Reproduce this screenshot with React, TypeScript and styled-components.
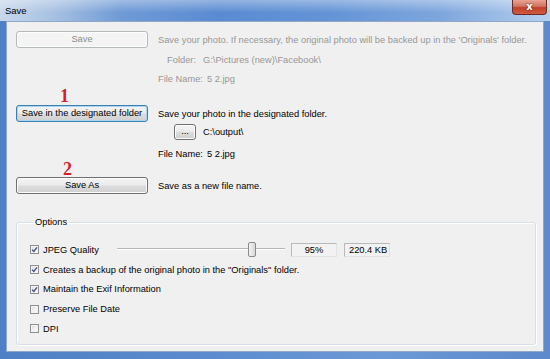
import React from 'react'
import styled, { createGlobalStyle } from 'styled-components'

const GlobalStyle = createGlobalStyle`
  html, body {
    margin: 0;
    padding: 0;
    background: #ffffff;
  }
  body {
    font-family: 'Liberation Sans', Arial, sans-serif;
    font-size: 9.3px;
    color: #000000;
  }
`

const Window = styled.div`
  width: 550px;
  height: 359px;
  display: flex;
  flex-direction: column;
  background: linear-gradient(90deg, #4f7fc4 0%, #5d8dd0 40%, #6b98d6 70%, #5b89cb 100%);
`

const TitleBar = styled.div`
  height: 21px;
  flex: none;
  display: flex;
  align-items: flex-start;
  justify-content: space-between;
  padding-left: 5px;
  padding-right: 3px;
  background:
    linear-gradient(180deg, rgba(255, 255, 255, 0.35) 0%, rgba(255, 255, 255, 0) 60%),
    linear-gradient(90deg, #c8d8ec 0%, #a6c0e2 10%, #6f9ad6 22%, #5a8bd2 40%, #6494d6 60%, #7ea6dd 80%, #a8c5e9 95%, #b8d0ee 100%);
`

const Title = styled.span`
  font-family: 'Liberation Sans', Arial, sans-serif;
  font-size: 9.5px;
  line-height: 21px;
  color: #000000;
`

const CloseButton = styled.div`
  width: 35px;
  height: 15px;
  box-sizing: border-box;
  border: 1px solid #6d2a23;
  border-top: none;
  border-radius: 0 0 4px 4px;
  background: linear-gradient(180deg, #e8a493 0%, #d27261 45%, #c0402c 55%, #d05a40 100%);
  display: flex;
  align-items: center;
  justify-content: center;
  color: #ffffff;
  font-family: 'DejaVu Sans', sans-serif;
  font-weight: bold;
  font-size: 10px;
  line-height: 1;
  text-shadow: 0 0 2px #5a1a10;
`

const Frame = styled.div`
  flex: 1;
  display: flex;
  padding: 0 6px 7px 6px;
`

const Client = styled.div`
  flex: 1;
  display: flex;
  flex-direction: column;
  background: #f0f0f0;
  border: 1px solid #91a7c6;
  padding: 9px 7px 6px 9px;
`

const ActionRow = styled.div`
  display: grid;
  grid-template-columns: 132px 1fr;
  column-gap: 10px;
  align-items: center;
  height: 17px;
`

const Button = styled.div<{ disabled?: boolean; focused?: boolean; width?: number }>`
  box-sizing: border-box;
  height: 17px;
  width: ${({ width }) => (width ? `${width}px` : 'auto')};
  border-radius: 3px;
  display: flex;
  align-items: center;
  justify-content: center;
  line-height: 1;
  border: 1px solid
    ${({ disabled, focused }) => (disabled ? '#b4b9bc' : focused ? '#3c7fb1' : '#707070')};
  background: ${({ disabled }) =>
    disabled
      ? '#f4f4f4'
      : 'linear-gradient(180deg, #f4f4f4 0%, #ebebeb 48%, #dddddd 52%, #cfcfcf 100%)'};
  box-shadow: ${({ focused }) => (focused ? 'inset 0 0 0 1px #a8d6f2' : 'inset 0 0 0 1px #fcfcfc')};
  color: ${({ disabled }) => (disabled ? '#8d8d8d' : '#000000')};
`

const Text = styled.span<{ muted?: boolean }>`
  color: ${({ muted }) => (muted ? '#979797' : '#000000')};
  white-space: nowrap;
`

const Details = styled.div<{ top: number; gap: number }>`
  display: flex;
  flex-direction: column;
  row-gap: ${({ gap }) => gap}px;
  padding-top: ${({ top }) => top}px;
`

const DetailRow = styled.div<{ height?: number }>`
  display: flex;
  align-items: center;
  height: ${({ height }) => height ?? 16}px;
  padding-left: 142px;
  white-space: nowrap;
`

const FieldLabel = styled.span<{ right?: boolean; muted?: boolean }>`
  min-width: 45px;
  flex: none;
  text-align: ${({ right }) => (right ? 'right' : 'left')};
  padding-right: ${({ right }) => (right ? '7px' : '4px')};
  box-sizing: border-box;
  color: ${({ muted }) => (muted ? '#979797' : '#000000')};
`

const BrowseSlot = styled.span`
  width: 45px;
  flex: none;
  display: flex;
  padding-left: 16px;
  box-sizing: border-box;
`

const Marker = styled.div<{ height: number; indent: number }>`
  height: ${({ height }) => height}px;
  line-height: ${({ height }) => height}px;
  padding-left: ${({ indent }) => indent}px;
  font-family: 'Liberation Serif', 'Times New Roman', serif;
  font-weight: bold;
  font-size: 18px;
  color: #d4202a;
`

const Group = styled.fieldset`
  margin: 22px 0 0 0;
  flex: 1;
  border: 1px solid #d5dfe5;
  box-shadow: inset 1px 1px 0 #ffffff, 1px 1px 0 #ffffff;
  border-radius: 3px;
  padding: 12px 0 0 13px;
  display: flex;
  flex-direction: column;
`

const Legend = styled.legend`
  padding: 0 2px;
  margin-left: 3px;
  line-height: 12px;
`

const OptionRow = styled.div`
  display: flex;
  align-items: center;
  height: 19.75px;
`

const CheckLabel = styled.label<{ width?: number }>`
  display: flex;
  align-items: center;
  column-gap: 4px;
  flex: none;
  width: ${({ width }) => (width ? `${width}px` : 'auto')};
  white-space: nowrap;
`

const Box = styled.span`
  box-sizing: border-box;
  width: 9px;
  height: 9px;
  border: 1px solid #8f8f8f;
  background: linear-gradient(135deg, #dcdcdc 0%, #f6f6f6 70%, #ffffff 100%);
  box-shadow: inset 0 0 0 1px #f4f4f4;
  display: flex;
  align-items: center;
  justify-content: center;
`

const Slider = styled.div`
  position: relative;
  width: 168px;
  height: 17px;
  flex: none;
  margin-right: 6px;
`

const Track = styled.div`
  position: absolute;
  left: 0;
  right: 0;
  top: 7px;
  height: 1px;
  background: #b8b8b8;
  border-bottom: 1px solid #ffffff;
`

const Thumb = styled.div`
  position: absolute;
  top: 1px;
  width: 8px;
  height: 15px;
  box-sizing: border-box;
  border: 1px solid #8a8a8a;
  border-radius: 2px;
  background: linear-gradient(90deg, #f2f2f2 0%, #e6e6e6 50%, #d6d6d6 100%);
`

const ValueBox = styled.div<{ align: 'center' | 'left' }>`
  box-sizing: border-box;
  width: 46px;
  height: 14px;
  flex: none;
  margin-right: 7px;
  border: 1px solid #b9b9b9;
  border-right-color: #e3e3e3;
  border-bottom-color: #e3e3e3;
  background: #f2f2f2;
  display: flex;
  align-items: center;
  justify-content: ${({ align }) => (align === 'center' ? 'center' : 'flex-start')};
  padding-left: ${({ align }) => (align === 'left' ? '4px' : '0')};
`

const Check = ({ checked }: { checked?: boolean }) => (
  <Box>
    {checked && (
      <svg width="7" height="7" viewBox="0 0 7 7">
        <path d="M1 3.6 L2.8 5.5 L6 1.3" fill="none" stroke="#3d4f87" strokeWidth="1.3" />
      </svg>
    )}
  </Box>
)

const Option = ({ label, checked }: { label: string; checked?: boolean }) => (
  <OptionRow>
    <CheckLabel>
      <Check checked={checked} />
      {label}
    </CheckLabel>
  </OptionRow>
)

const quality = { thumb: 0.78 }

export default function App() {
  return (
    <>
      <GlobalStyle />
      <Window>
        <TitleBar>
          <Title>Save</Title>
          <CloseButton>x</CloseButton>
        </TitleBar>
        <Frame>
          <Client>
            <ActionRow>
              <Button disabled>Save</Button>
              <Text muted>
                Save your photo. If necessary, the original photo will be backed up in the 'Originals' folder.
              </Text>
            </ActionRow>
            <Details top={4} gap={3}>
              <DetailRow>
                <FieldLabel right muted>
                  Folder:
                </FieldLabel>
                <Text muted>G:\Pictures (new)\Facebook\</Text>
              </DetailRow>
              <DetailRow>
                <FieldLabel muted>File Name:</FieldLabel>
                <Text muted>5 2.jpg</Text>
              </DetailRow>
            </Details>
            <Marker height={18} indent={44}>
              1
            </Marker>
            <ActionRow>
              <Button focused>Save in the designated folder</Button>
              <Text>Save your photo in the designated folder.</Text>
            </ActionRow>
            <Details top={2} gap={6}>
              <DetailRow>
                <BrowseSlot>
                  <Button width={22} style={{ height: 16 }}>
                    ...
                  </Button>
                </BrowseSlot>
                <Text>C:\output\</Text>
              </DetailRow>
              <DetailRow>
                <FieldLabel>File Name:</FieldLabel>
                <Text>5 2.jpg</Text>
              </DetailRow>
            </Details>
            <Marker height={15} indent={47}>
              2
            </Marker>
            <ActionRow>
              <Button>Save As</Button>
              <Text>Save as a new file name.</Text>
            </ActionRow>
            <Group>
              <Legend>Options</Legend>
              <OptionRow>
                <CheckLabel width={87}>
                  <Check checked />
                  JPEG Quality
                </CheckLabel>
                <Slider>
                  <Track />
                  <Thumb style={{ left: `${quality.thumb * 168}px` }} />
                </Slider>
                <ValueBox align="center">95%</ValueBox>
                <ValueBox align="left">220.4 KB</ValueBox>
              </OptionRow>
              <Option checked label={'Creates a backup of the original photo in the "Originals" folder.'} />
              <Option checked label="Maintain the Exif Information" />
              <Option label="Preserve File Date" />
              <Option label="DPI" />
            </Group>
          </Client>
        </Frame>
      </Window>
    </>
  )
}
